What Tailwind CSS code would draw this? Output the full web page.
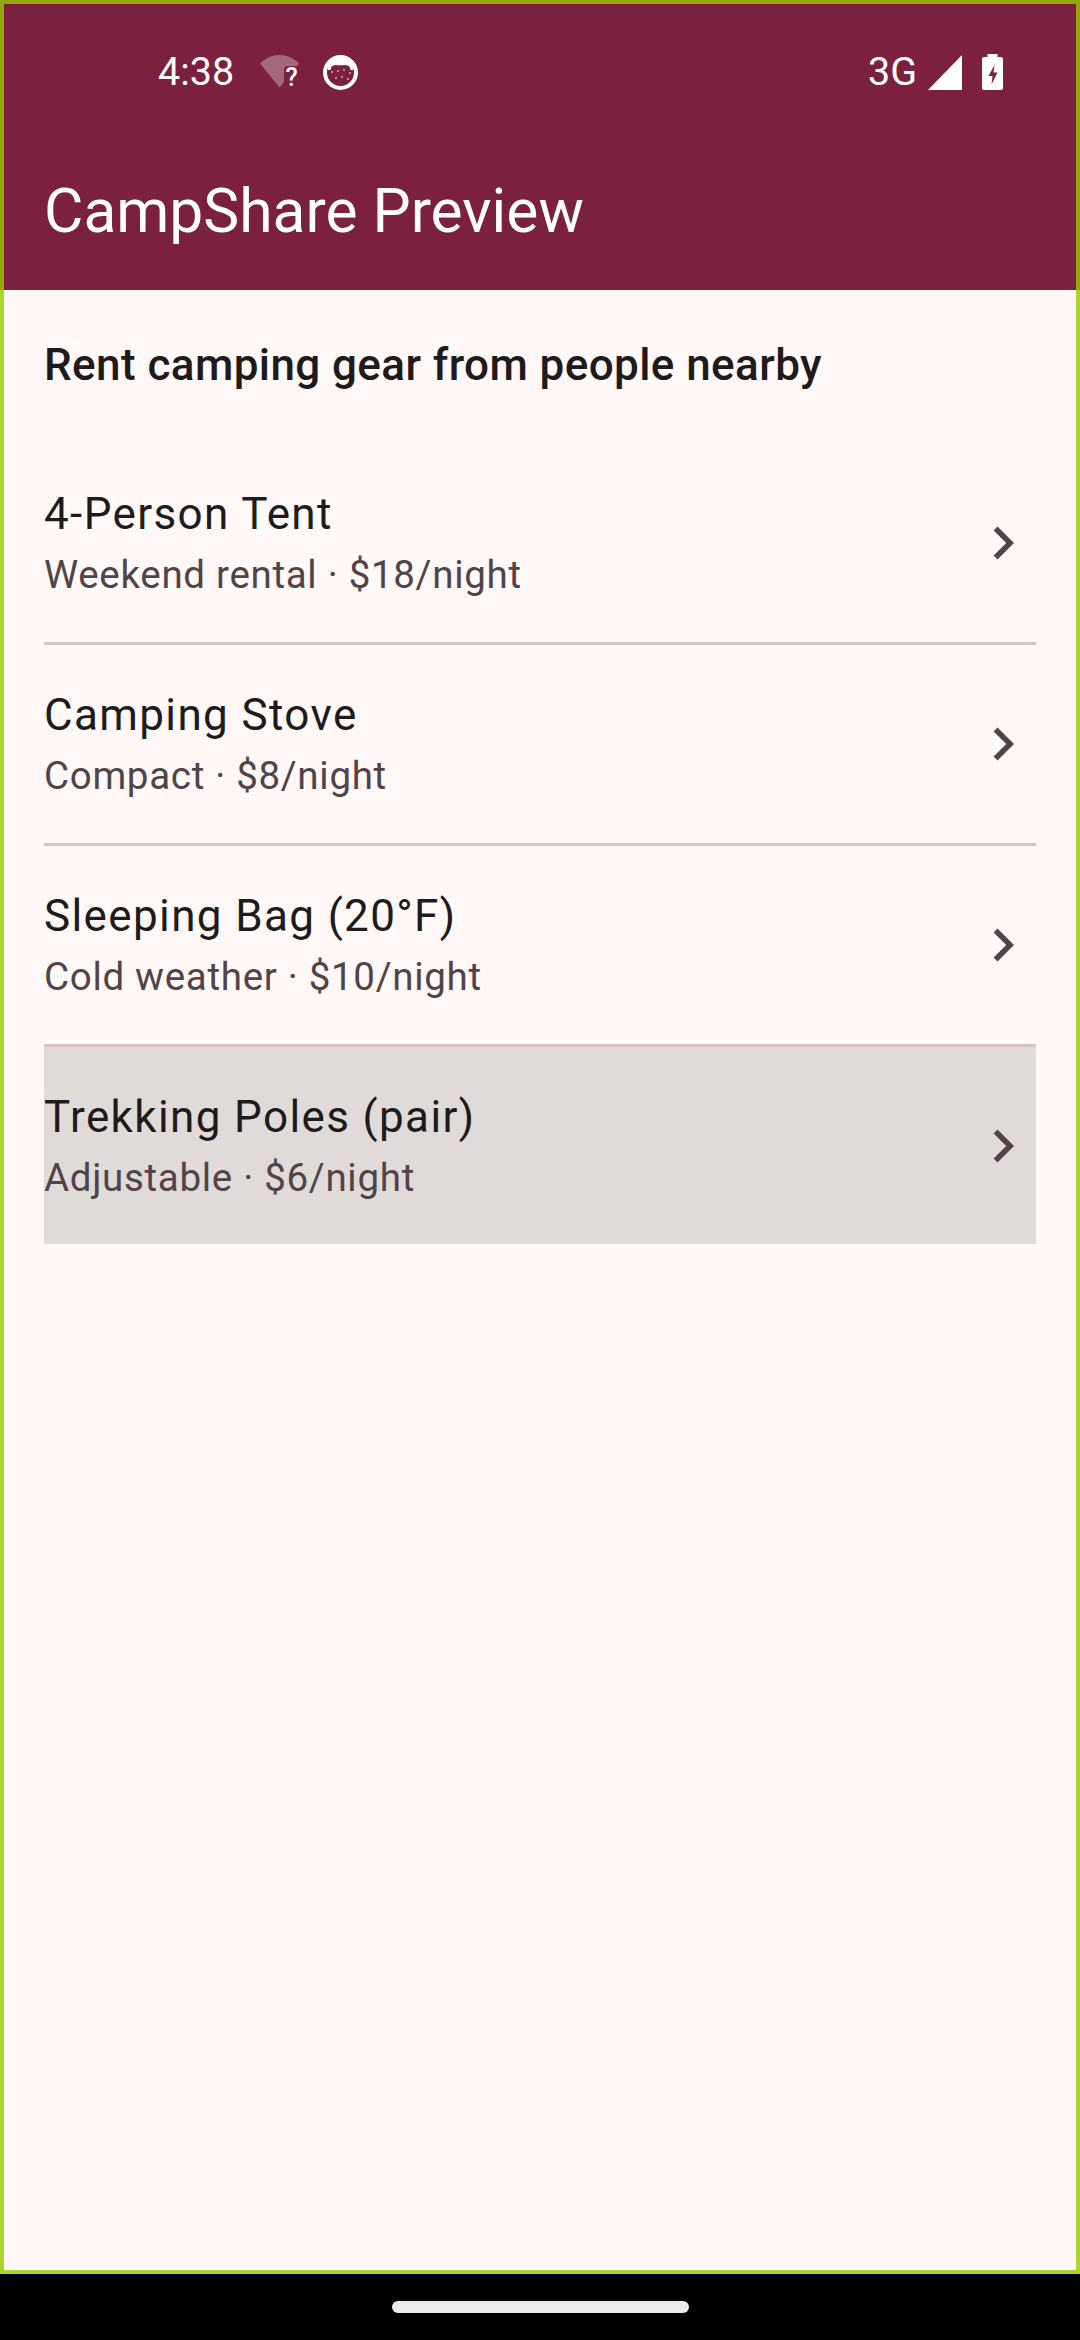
<!DOCTYPE html>
<html><head><meta charset="utf-8"><script src="https://cdn.jsdelivr.net/npm/@tailwindcss/browser@4"></script></head>
<body class="m-0 bg-black">
<div class="w-[1080px] h-[2340px] flex flex-col bg-black font-[Roboto,sans-serif]">
  <header class="h-[290px] shrink-0 flex flex-col bg-[#7b203f] border-t-[4px] border-x-[4px] border-[#96a80a] text-white">
    <div class="h-[136px] shrink-0 flex items-start justify-between pl-[154px] pr-[73px] pt-[48px]">
      <div class="flex items-center h-[40px]">
        <span class="text-[39.5px] leading-[40px] w-[102px]">4:38</span>
        <svg class="mt-[5px]" width="39" height="39" viewBox="0 0 39 39"><path d="M0 8.500C5.500 3 12 0 19.500 0C27 0 33.500 3 39 8.500L19.500 32.500Z" fill="#ffffff" fill-opacity="0.32"/><path d="M24 15a4 4 0 0 1 4-4h11v22H24z" fill="#7b203f"/><text x="31.500" y="31" text-anchor="middle" font-family="Roboto" font-weight="500" font-size="25" fill="#fff">?</text></svg>
        <svg class="ml-[24px]" width="35" height="35" viewBox="0 0 35 35"><circle cx="17.500" cy="17.500" r="15.500" fill="#7b203f" stroke="#fff" stroke-width="4"/><path d="M4 9Q17.500 -3 31 9L30 15H27.500L26.500 11.500L23 10Q17.500 10.500 12 10L8.500 11.500L7.500 15H5Z" fill="#fff"/><g fill="#fff" opacity=".65"><circle cx="9" cy="17" r="1"/><circle cx="15" cy="16" r="1"/><circle cx="21" cy="15" r="1"/><circle cx="27" cy="18" r="1"/><circle cx="13" cy="23" r="1"/><circle cx="19" cy="22" r="1"/><circle cx="25" cy="24" r="1"/></g></svg>
      </div>
      <div class="flex items-center h-[40px]">
        <span class="text-[39.5px] leading-[40px] w-[60px]">3G</span>
        <svg width="34" height="35" viewBox="0 0 34 35"><path d="M0 35L34 0V35Z" fill="#fff"/></svg>
        <svg class="ml-[20px]" width="21" height="36" viewBox="0 0 21 36"><path d="M5.500 0h10v3h3.500a2 2 0 0 1 2 2v29a2 2 0 0 1-2 2H2a2 2 0 0 1-2-2V5a2 2 0 0 1 2-2h3.500Z" fill="#fff"/><path d="M12.500 11L6.500 22h4l-1 8.500 6-12h-4l1-7.500Z" fill="#7b203f"/></svg>
      </div>
    </div>
    <div class="flex-1 flex items-center pl-[40px] pb-[6px]">
      <h1 class="text-[60.5px] leading-[72px] font-normal">CampShare Preview</h1>
    </div>
  </header>
  <main class="h-[1984px] shrink-0 border-x-[4px] border-b-[4px] border-[#a9d62c] bg-[#fff8f6] px-[40px] text-[#201a1b]">
    <h2 class="mt-[45px] mb-[49px] text-[44px] leading-[60px] font-medium tracking-[0.41px]">Rent camping gear from people nearby</h2>
    <ul>
      <li class="h-[201px] flex items-center justify-between border-b-[3px] border-[#d7c2c4]">
        <div class="pb-[3px]"><p class="text-[44px] leading-[66px] tracking-[1.375px]">4-Person Tent</p><p class="text-[38.5px] leading-[55px] tracking-[0.69px] text-[#514347]">Weekend rental · $18/night</p></div>
        <svg width="66" height="66" viewBox="0 0 24 24"><path d="M10 6L8.590 7.410 13.170 12l-4.580 4.590L10 18l6-6z" fill="#514347"/></svg>
      </li>
      <li class="h-[201px] flex items-center justify-between border-b-[3px] border-[#d7c2c4]">
        <div class="pb-[3px]"><p class="text-[44px] leading-[66px] tracking-[1.375px]">Camping Stove</p><p class="text-[38.5px] leading-[55px] tracking-[0.69px] text-[#514347]">Compact · $8/night</p></div>
        <svg width="66" height="66" viewBox="0 0 24 24"><path d="M10 6L8.590 7.410 13.170 12l-4.580 4.590L10 18l6-6z" fill="#514347"/></svg>
      </li>
      <li class="h-[201px] flex items-center justify-between border-b-[3px] border-[#d7c2c4]">
        <div class="pb-[3px]"><p class="text-[44px] leading-[66px] tracking-[1.375px]">Sleeping Bag (20°F)</p><p class="text-[38.5px] leading-[55px] tracking-[0.69px] text-[#514347]">Cold weather · $10/night</p></div>
        <svg width="66" height="66" viewBox="0 0 24 24"><path d="M10 6L8.590 7.410 13.170 12l-4.580 4.590L10 18l6-6z" fill="#514347"/></svg>
      </li>
      <li class="h-[197px] flex items-center justify-between bg-[#e0dbd9]">
        <div class="pb-[3px]"><p class="text-[44px] leading-[66px] tracking-[1.375px]">Trekking Poles (pair)</p><p class="text-[38.5px] leading-[55px] tracking-[0.69px] text-[#514347]">Adjustable · $6/night</p></div>
        <svg width="66" height="66" viewBox="0 0 24 24"><path d="M10 6L8.590 7.410 13.170 12l-4.580 4.590L10 18l6-6z" fill="#514347"/></svg>
      </li>
    </ul>
  </main>
  <footer class="flex-1 flex items-start justify-center bg-black pt-[27px]">
    <div class="w-[297px] h-[12px] rounded-full bg-[#ebebeb]"></div>
  </footer>
</div>
</body></html>
